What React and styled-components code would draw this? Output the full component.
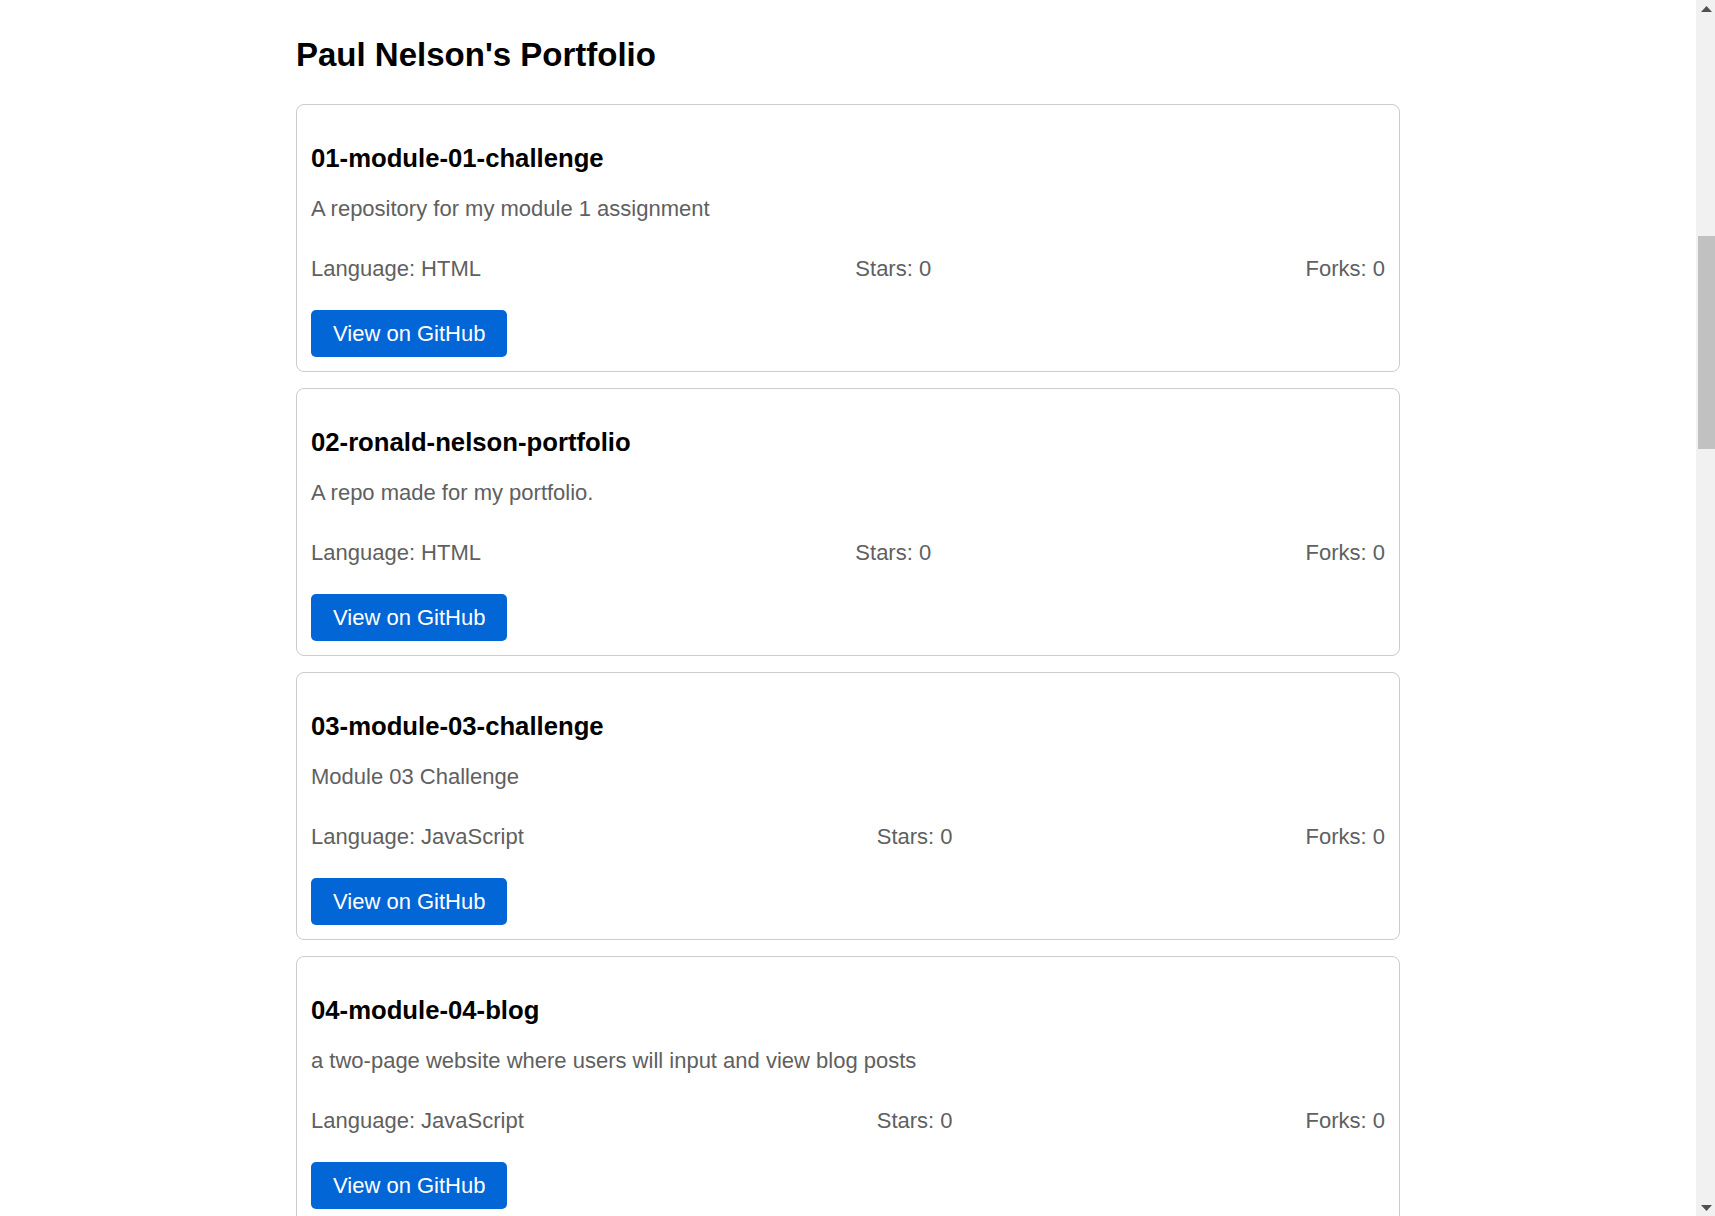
import React from "react";
import styled, { createGlobalStyle } from "styled-components";

const GlobalStyle = createGlobalStyle`
  html, body {
    margin: 0;
    padding: 0;
    background: #ffffff;
  }
  body {
    font-family: "Liberation Sans", Arial, Helvetica, sans-serif;
    font-size: 22px;
    color: #000;
    padding-right: 19px;
  }
`;

const Page = styled.main`
  max-width: 1104px;
  margin: 0 auto;
  padding: 36px 0 40px;
`;

const Title = styled.h2`
  margin: 0 0 30px;
  font-size: 33px;
  line-height: 38px;
  font-weight: bold;
  color: #000;
`;

const CardList = styled.div`
  display: flex;
  flex-direction: column;
  gap: 16px;
`;

const Card = styled.section`
  border: 1px solid #cccccc;
  border-radius: 8px;
  padding: 14px;
  background: #fff;
`;

const RepoName = styled.h3`
  margin: 24px 0 23px;
  font-size: 25.7px;
  line-height: 30px;
  font-weight: bold;
  color: #000;
`;

const Description = styled.p`
  margin: 0 0 35px;
  font-size: 22px;
  line-height: 25px;
  color: #606060;
`;

const Stats = styled.div`
  display: flex;
  justify-content: space-between;
  align-items: center;
  margin-bottom: 29px;
  font-size: 22px;
  line-height: 25px;
  color: #606060;
`;

const Stat = styled.span``;

const GitHubButton = styled.a`
  display: inline-block;
  padding: 11px 22px;
  font-size: 22px;
  line-height: 25px;
  color: #ffffff;
  background: #0366d6;
  border-radius: 5px;
  text-decoration: none;
  cursor: pointer;
`;

/* Browser scrollbar seen at the right edge of the reference */
const ScrollTrack = styled.div`
  position: fixed;
  top: 0;
  right: 0;
  width: 19px;
  height: 100vh;
  background: #f1f1f1;
  display: flex;
  flex-direction: column;
  align-items: flex-end;
`;

const ScrollArrow = styled.div`
  width: 17px;
  height: 17px;
  display: flex;
  align-items: center;
  justify-content: center;
`;

const ScrollThumbArea = styled.div`
  flex: 1;
  width: 17px;
  padding-top: 219px;
`;

const ScrollThumb = styled.div`
  width: 17px;
  height: 213px;
  background: #c1c1c1;
`;

const Arrow = ({ up }) => (
  <svg width="11" height="6" viewBox="0 0 11 6">
    {up ? (
      <polygon points="5.5,0 11,6 0,6" fill="#505050" />
    ) : (
      <polygon points="0,0 11,0 5.5,6" fill="#505050" />
    )}
  </svg>
);

const repos = [
  { name: "01-module-01-challenge", description: "A repository for my module 1 assignment", language: "HTML", stars: 0, forks: 0 },
  { name: "02-ronald-nelson-portfolio", description: "A repo made for my portfolio.", language: "HTML", stars: 0, forks: 0 },
  { name: "03-module-03-challenge", description: "Module 03 Challenge", language: "JavaScript", stars: 0, forks: 0 },
  { name: "04-module-04-blog", description: "a two-page website where users will input and view blog posts", language: "JavaScript", stars: 0, forks: 0 },
  { name: "05-module-05-work-day-scheduler", description: "A simple calendar application for scheduling a work day", language: "JavaScript", stars: 0, forks: 0 },
  { name: "06-module-06-weather-dashboard", description: "A weather dashboard using the OpenWeather API", language: "JavaScript", stars: 0, forks: 0 },
];

export default function App() {
  return (
    <>
      <GlobalStyle />
      <Page>
        <Title>Paul Nelson's Portfolio</Title>
        <CardList>
          {repos.map((repo) => (
            <Card key={repo.name}>
              <RepoName>{repo.name}</RepoName>
              <Description>{repo.description}</Description>
              <Stats>
                <Stat>Language: {repo.language}</Stat>
                <Stat>Stars: {repo.stars}</Stat>
                <Stat>Forks: {repo.forks}</Stat>
              </Stats>
              <GitHubButton href="#">View on GitHub</GitHubButton>
            </Card>
          ))}
        </CardList>
      </Page>
      <ScrollTrack aria-hidden="true">
        <ScrollArrow>
          <Arrow up />
        </ScrollArrow>
        <ScrollThumbArea>
          <ScrollThumb />
        </ScrollThumbArea>
        <ScrollArrow>
          <Arrow />
        </ScrollArrow>
      </ScrollTrack>
    </>
  );
}
